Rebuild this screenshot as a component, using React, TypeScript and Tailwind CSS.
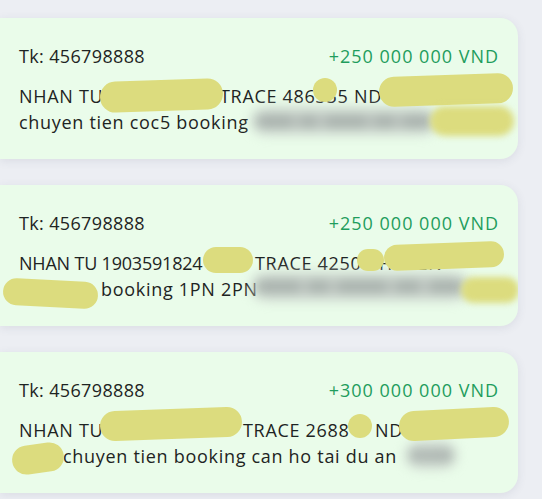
import React from 'react';

type Blob = { left: number; top: number; w: number; h: number; kind: 'yellow' | 'gray' | 'yellowBlur'; rot?: number };

interface Seg {
  text: string;
  w?: number;
  tight?: boolean;
}

interface Tx {
  amount: string;
  line2: Seg[];
  line3: Seg[];
  blobs: Blob[];
}

const txs: Tx[] = [
  {
    amount: '+250 000 000 VND',
    line2: [{ text: 'NHAN TU', w: 201 }, { text: 'TRACE 486335 ND' }],
    line3: [{ text: 'chuyen tien coc5 booking' }],
    blobs: [
      { left: 252, top: 90, w: 184, h: 26, kind: 'gray' },
      { left: 100, top: 62, w: 123, h: 31, kind: 'yellow', rot: -2 },
      { left: 313, top: 60, w: 24, h: 24, kind: 'yellow' },
      { left: 379, top: 57, w: 134, h: 30, kind: 'yellow', rot: -2 },
      { left: 430, top: 88, w: 84, h: 30, kind: 'yellowBlur' },
    ],
  },
  {
    amount: '+250 000 000 VND',
    line2: [{ text: 'NHAN TU 1903591824', w: 236, tight: true }, { text: 'TRACE 4250 CHUYEN' }],
    line3: [{ text: '', w: 82 }, { text: 'booking 1PN 2PN' }],
    blobs: [
      { left: 252, top: 88, w: 216, h: 27, kind: 'gray' },
      { left: 203, top: 62, w: 50, h: 26, kind: 'yellow' },
      { left: 3, top: 95, w: 95, h: 27, kind: 'yellow', rot: 3 },
      { left: 357, top: 64, w: 27, h: 22, kind: 'yellow' },
      { left: 384, top: 58, w: 120, h: 26, kind: 'yellow', rot: -2 },
      { left: 461, top: 92, w: 58, h: 26, kind: 'yellowBlur' },
    ],
  },
  {
    amount: '+300 000 000 VND',
    line2: [{ text: 'NHAN TU', w: 224 }, { text: 'TRACE 2688', w: 132 }, { text: 'ND' }],
    line3: [{ text: '', w: 44 }, { text: 'chuyen tien booking can ho tai du an' }],
    blobs: [
      { left: 406, top: 90, w: 50, h: 26, kind: 'gray' },
      { left: 100, top: 57, w: 142, h: 30, kind: 'yellow', rot: -2 },
      { left: 12, top: 92, w: 52, h: 29, kind: 'yellow', rot: -8 },
      { left: 348, top: 62, w: 24, h: 24, kind: 'yellow' },
      { left: 399, top: 57, w: 110, h: 30, kind: 'yellow', rot: -3 },
    ],
  },
];

const blobClass: Record<Blob['kind'], string> = {
  yellow: 'bg-[#dcdc7e] rounded-full',
  gray: 'bg-[#c9d1cb] rounded-full blur-[6px] flex items-center justify-between px-[4px]',
  yellowBlur: 'bg-[#dcdc7e] rounded-full blur-[3px]',
};

// darker smudges that read as blurred words
const smudges = ['22%', '12%', '26%', '14%', '18%'];

const Line: React.FC<{ segs: Seg[] }> = ({ segs }) => (
  <div className="flex h-[26px] items-center whitespace-nowrap">
    {segs.map((s, i) => (
      <span
        key={i}
        className={`shrink-0 ${s.tight ? 'tracking-[-0.2px]' : ''}`}
        style={s.w !== undefined ? { width: s.w } : undefined}
      >
        {s.text}
      </span>
    ))}
  </div>
);

const TxCard: React.FC<{ tx: Tx }> = ({ tx }) => (
  <div className="relative h-[141px] overflow-hidden rounded-r-[18px] bg-[#eafcea] pt-[25px] pr-[19px] pl-[19px] shadow-[0_2px_10px_rgba(60,70,100,0.10)]">
    <div className="flex h-[26px] items-center justify-between">
      <span className="tracking-[0.35px] text-[#1e2423]">Tk: 456798888</span>
      <span className="tracking-[1px] text-[#1f9d5d]">{tx.amount}</span>
    </div>
    <div className="mt-[14px] tracking-[0.7px] text-[#1e2423]">
      <Line segs={tx.line2} />
      <Line segs={tx.line3} />
    </div>
    {tx.blobs.map((b, i) => (
      <div
        key={i}
        className={`absolute ${blobClass[b.kind]}`}
        style={{ left: b.left, top: b.top, width: b.w, height: b.h, transform: b.rot ? `rotate(${b.rot}deg)` : undefined }}
      >
        {b.kind === 'gray' &&
          smudges.map((w, j) => (
            <div key={j} className="h-[11px] shrink-0 rounded-full bg-[#a3ada8]" style={{ width: w }} />
          ))}
      </div>
    ))}
  </div>
);

export default function App() {
  return (
    <div className="h-[499px] w-[542px] overflow-hidden bg-[#eceef3] pt-[18px] pr-[24px] font-['Open_Sans',sans-serif] text-[18px] font-medium">
      <div className="flex flex-col gap-[26px]">
        {txs.map((tx, i) => (
          <TxCard key={i} tx={tx} />
        ))}
      </div>
    </div>
  );
}
